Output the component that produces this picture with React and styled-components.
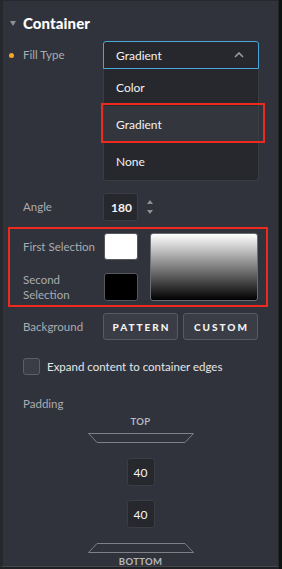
import React from 'react';
import styled, { createGlobalStyle } from 'styled-components';

const Global = createGlobalStyle`
  html, body { margin: 0; padding: 0; background: #1f2125; }
  body { font-family: Lato, "Noto Sans", sans-serif; -webkit-font-smoothing: antialiased; }
  * { box-sizing: border-box; }
`;

const Frame = styled.div`
  width: 282px;
  height: 569px;
  display: flex;
  background: #1f2125;
  overflow: hidden;
`;

const Column = styled.div`
  width: 279px;
  display: flex;
  flex-direction: column;
`;

const RightEdge = styled.div`
  width: 3px;
  background: #0c140d;
`;

const Panel = styled.div`
  height: 567px;
  background: #30333b;
  border-left: 3px solid #26282d;
  border-right: 1px solid #23252a;
  border-top: 1px solid #26282d;
  border-bottom: 1px solid #44474e;
  padding-top: 13px;
  display: flex;
  flex-direction: column;
  overflow: hidden;
`;

const Header = styled.div`
  height: 20px;
  display: flex;
  align-items: center;
  gap: 7px;
  padding-left: 7px;
  color: #ffffff;
  font-size: 15px;
  font-weight: 900;
  letter-spacing: 0.1px;
`;

const Caret = styled.span`
  width: 0;
  height: 0;
  border-left: 3px solid transparent;
  border-right: 3px solid transparent;
  border-top: 5px solid #8d9095;
`;

const FieldRow = styled.div`
  display: grid;
  grid-template-columns: 13px 80px auto;
  align-items: ${p => (p.$top ? 'start' : 'center')};
  padding-left: 7px;
  margin-top: ${p => p.$mt || 0}px;
`;

const Marker = styled.span`
  width: 5px;
  height: 5px;
  border-radius: 50%;
  background: #f5a623;
  margin-left: -1px;
  align-self: ${p => (p.$top ? 'start' : 'center')};
  margin-top: ${p => (p.$top ? '12px' : '0')};
`;

const Label = styled.span`
  color: #a9acb2;
  font-size: 11.5px;
  line-height: ${p => p.$lh || 14}px;
`;

const Control = styled.div`
  display: flex;
  flex-direction: column;
  width: 156px;
`;

const Select = styled.div`
  height: 28px;
  border: 1px solid #4aa6d8;
  border-radius: 3px 3px 0 0;
  background: #26282d;
  display: flex;
  align-items: center;
  justify-content: space-between;
  padding: 0 14px 0 12px;
  color: #f2f2f2;
  font-size: 12px;
`;

const Menu = styled.div`
  background: #26282d;
  border: 1px solid #3a3d44;
  border-top: none;
  border-radius: 0 0 3px 3px;
  display: flex;
  flex-direction: column;
`;

const MenuItem = styled.div`
  position: relative;
  height: ${p => p.$h || 37}px;
  display: flex;
  align-items: center;
  padding-left: 12px;
  color: #f2f2f2;
  font-size: 12px;
  background: ${p => (p.$active ? '#33373d' : 'transparent')};
`;

const Highlight = styled.span`
  position: absolute;
  left: -3px;
  top: -3px;
  right: -7px;
  bottom: 0;
  border: 2px solid #ee2a1f;
  pointer-events: none;
`;

const NumberRow = styled.div`
  display: flex;
  align-items: center;
  gap: 9px;
`;

const NumBox = styled.div`
  width: ${p => p.$w || 35}px;
  height: 28px;
  background: #26282d;
  border: 1px solid #3a3d44;
  border-radius: 3px;
  display: flex;
  align-items: center;
  justify-content: ${p => (p.$center ? 'center' : 'flex-end')};
  padding-right: ${p => (p.$center ? 0 : 5)}px;
  color: #f4f4f4;
  font-size: 12px;
  font-weight: ${p => (p.$bold ? 700 : 400)};
`;

const Spinner = styled.div`
  display: flex;
  flex-direction: column;
  gap: 6px;
`;

const Tri = styled.span`
  width: 0;
  height: 0;
  border-left: 3px solid transparent;
  border-right: 3px solid transparent;
  ${p => (p.$down ? 'border-top: 4px solid #8d9095;' : 'border-bottom: 4px solid #8d9095;')}
`;

const Group = styled.div`
  position: relative;
  margin: 12px 0 0 20px;
  width: 235px;
  display: grid;
  grid-template-columns: 81px 34px 120px;
  grid-template-rows: 27px 28px;
  row-gap: 13px;
  align-items: center;

  &::after {
    content: '';
    position: absolute;
    left: -15px;
    right: -10px;
    top: -6px;
    bottom: -6px;
    border: 2px solid #ee2a1f;
    pointer-events: none;
  }
`;

const Swatch = styled.div`
  width: 34px;
  height: 100%;
  border-radius: 3px;
  border: 1px solid #55585f;
  background: ${p => p.$color};
`;

const Preview = styled.div`
  grid-column: 3;
  grid-row: 1 / span 2;
  margin-left: 12px;
  height: 68px;
  align-self: stretch;
  border-radius: 3px;
  border: 1px solid #6a6d73;
  background: linear-gradient(#ffffff, #000000);
`;

const ButtonRow = styled.div`
  display: flex;
  gap: 5px;
`;

const Button = styled.div`
  width: 75px;
  height: 27px;
  background: #3a3d45;
  border: 1px solid #575a61;
  border-radius: 3px;
  display: flex;
  align-items: center;
  justify-content: center;
  color: #f4f4f4;
  font-size: 10px;
  font-weight: 900;
  letter-spacing: 2px;
  padding-left: 2px;
`;

const CheckRow = styled.label`
  display: flex;
  align-items: center;
  gap: 7px;
  margin: 18px 0 0 20px;
  color: #e6e7e9;
  font-size: 11.5px;
`;

const Box = styled.span`
  width: 17px;
  height: 17px;
  border-radius: 3px;
  border: 1px solid #5c5f66;
  background: #3a3d45;
`;

const SectionLabel = styled.div`
  margin: 22px 0 0 20px;
  color: #a9acb2;
  font-size: 11.5px;
  line-height: 14px;
`;

const PadArea = styled.div`
  display: flex;
  flex-direction: column;
  align-items: center;
`;

const Side = styled.div`
  margin-top: ${p => p.$mt}px;
  height: 10px;
  line-height: 10px;
  color: #b5b8bd;
  font-size: 9.5px;
  font-weight: 700;
  letter-spacing: 0.3px;
`;

const Trap = styled.svg`
  display: block;
  margin-top: ${p => p.$mt}px;
`;

const Spacer = styled.div`
  height: ${p => p.$h}px;
`;

function Trapezoid({ flip, mt }) {
  return (
    <Trap $mt={mt} width="106" height="10" viewBox="0 0 106 10">
      <path
        d={flip ? 'M9 0.5 H97 L105.5 9.5 H0.5 Z' : 'M0.5 0.5 H105.5 L97 9.5 H9 Z'}
        fill="none"
        stroke="#7d8086"
        strokeWidth="1"
      />
    </Trap>
  );
}

export default function App() {
  return (
    <>
      <Global />
      <Frame>
        <Column>
          <Panel>
            <Header>
              <Caret />
              Container
            </Header>

            <FieldRow $top $mt={9}>
              <Marker $top />
              <Label $lh={28}>Fill Type</Label>
              <Control>
                <Select>
                  Gradient
                  <svg width="10" height="6" viewBox="0 0 10 6">
                    <path d="M1 5 L5 1 L9 5" fill="none" stroke="#9a9da2" strokeWidth="1.6" />
                  </svg>
                </Select>
                <Menu>
                  <MenuItem>Color</MenuItem>
                  <MenuItem $active>
                    Gradient
                    <Highlight />
                  </MenuItem>
                  <MenuItem>None</MenuItem>
                </Menu>
              </Control>
            </FieldRow>

            <FieldRow $mt={12}>
              <span />
              <Label>Angle</Label>
              <NumberRow>
                <NumBox $bold>180</NumBox>
                <Spinner>
                  <Tri />
                  <Tri $down />
                </Spinner>
              </NumberRow>
            </FieldRow>

            <Group>
              <Label>First Selection</Label>
              <Swatch $color="#ffffff" />
              <Preview />
              <Label $lh={15}>
                Second
                <br />
                Selection
              </Label>
              <Swatch $color="#000000" />
            </Group>

            <FieldRow $mt={12}>
              <span />
              <Label>Background</Label>
              <ButtonRow>
                <Button>PATTERN</Button>
                <Button>CUSTOM</Button>
              </ButtonRow>
            </FieldRow>

            <CheckRow>
              <Box />
              Expand content to container edges
            </CheckRow>

            <SectionLabel>Padding</SectionLabel>

            <PadArea>
              <Side $mt={6}>TOP</Side>
              <Trapezoid mt={6} />
              <Spacer $h={15} />
              <NumBox $w={28} $center>40</NumBox>
              <Spacer $h={14} />
              <NumBox $w={28} $center>40</NumBox>
              <Trapezoid flip mt={15} />
              <Side $mt={4}>BOTTOM</Side>
            </PadArea>
          </Panel>
        </Column>
        <RightEdge />
      </Frame>
    </>
  );
}
